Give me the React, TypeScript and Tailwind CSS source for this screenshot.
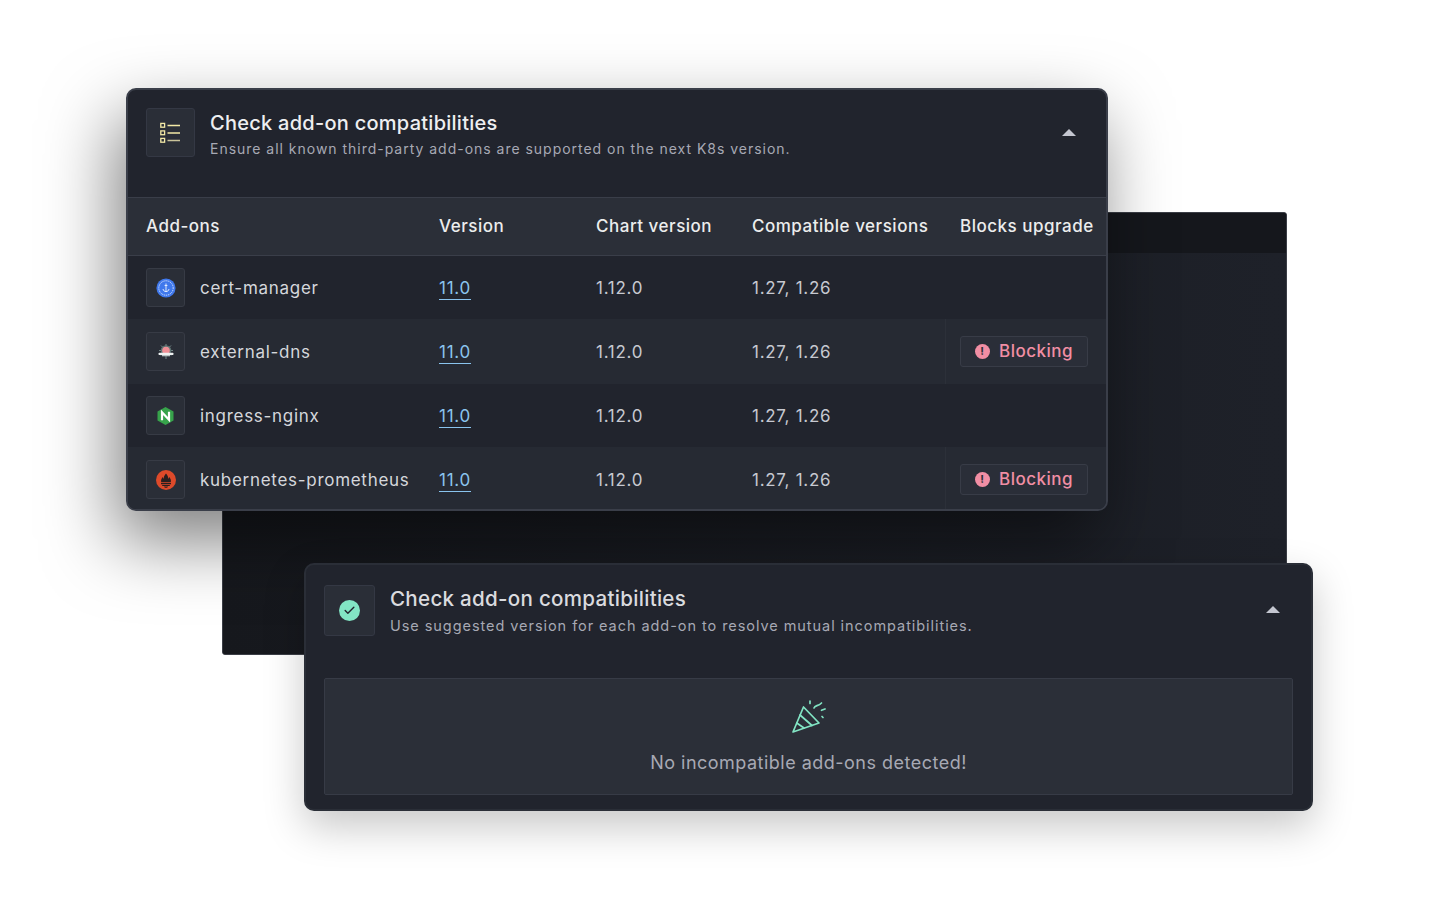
import { Check } from "lucide-react";

type Row = {
  name: string;
  icon: "cert" | "dns" | "nginx" | "prom";
  blocking?: boolean;
  shaded?: boolean;
};

const rows: Row[] = [
  { name: "cert-manager", icon: "cert" },
  { name: "external-dns", icon: "dns", blocking: true, shaded: true },
  { name: "ingress-nginx", icon: "nginx" },
  { name: "kubernetes-prometheus", icon: "prom", blocking: true, shaded: true },
];

function ChecklistIcon() {
  return (
    <svg className="-ml-px" width="20" height="22" viewBox="0 0 20 22" fill="none">
      <g stroke="#f3e9a6" strokeWidth="1.3">
        <rect x="0.8" y="1.4" width="3.8" height="3.8" />
        <rect x="0.8" y="8.900" width="3.8" height="3.8" />
        <rect x="0.8" y="16.400" width="3.8" height="3.8" />
        <path d="M7.500 3.500H20M7.500 11H20" />
        <path d="M7.500 18.500H20" stroke="#c9c39a" />
      </g>
    </svg>
  );
}

function AddonIcon({ icon }: { icon: Row["icon"] }) {
  if (icon === "cert") {
    return (
      <svg width="20" height="20" viewBox="0 0 20 20" fill="none">
        <circle cx="10" cy="10" r="9.600" fill="#3f78ec" />
        <circle cx="10" cy="10" r="7.200" stroke="#dbe7ff" strokeWidth="1" strokeDasharray="1.200 0.800" />
        <path d="M10 5.500v8M7 11c.4 1.800 1.500 2.600 3 2.600s2.600-.8 3-2.600M8.600 7.500h2.800" stroke="#eef4ff" strokeWidth="0.9" />
      </svg>
    );
  }
  if (icon === "dns") {
    return (
      <svg width="18" height="18" viewBox="0 0 18 18" fill="none">
        <path d="M9 1v15M2 7.500h14M4 2.500l10 10M14 2.500L4 12.500" stroke="#7d9290" strokeWidth="0.9" />
        <circle cx="9" cy="7.500" r="5.300" fill="#5d7372" />
        <circle cx="9" cy="7.500" r="3.800" fill="#ef8f96" />
        <rect x="1.500" y="9.700" width="15" height="2.300" rx="0.800" fill="#eef1f1" />
        <rect x="5" y="12" width="8" height="1.300" fill="#b9c4c4" />
      </svg>
    );
  }
  if (icon === "nginx") {
    return (
      <svg width="17" height="18" viewBox="0 0 17 18" fill="none">
        <path d="M8.500 0l8 4.500v9L8.500 18l-8-4.500v-9z" fill="#37a34b" />
        <path d="M5 13.300V5.200l7 7.600V4.700" stroke="#fff" strokeWidth="2.200" />
      </svg>
    );
  }
  return (
    <svg width="20" height="20" viewBox="0 0 20 20" fill="none">
      <circle cx="10" cy="10" r="10" fill="#dd4a2a" />
      <path
        d="M5.200 12.200C4.600 10 5.800 8.600 6.500 7c.5.700.8 1.300 1 2 .3-2.200 1-4 2.500-5.500C11.500 5 12.200 6.800 12.500 9c.2-.7.5-1.300 1-2 .7 1.600 1.900 3 1.300 5.200z"
        fill="#2a1f1f"
      />
      <path d="M5 13h10v1.300H5zM6.200 15h7.600v1H6.200zM8 16.400h4c-.3 1-1 1.400-2 1.400s-1.700-.4-2-1.400z" fill="#2a1f1f" />
    </svg>
  );
}

function BlockingBadge() {
  return (
    <div className="-mt-px flex h-[31px] w-[128px] items-center gap-[9px] rounded-[3px] border border-[#383c47] bg-[#2a2e38] pl-[14px]">
      <span className="flex h-[15px] w-[15px] items-center justify-center rounded-full bg-[#f18ea4] text-[11px] font-bold leading-none text-[#2a2e38]">
        !
      </span>
      <span className="pt-[2px] text-[17px] font-medium tracking-[0.03em] text-[#f18ea4]">Blocking</span>
    </div>
  );
}

function TableRow({ row }: { row: Row }) {
  return (
    <div className={`flex items-center text-[17px] tracking-[0.042em] text-[#c7c9d1] ${row.shaded ? "h-[65px] bg-[#262a33]" : "h-[63px]"}`}>
      <div className="flex w-[311px] shrink-0 items-center gap-[15px] pl-[18px]">
        <div className="flex h-[39px] w-[39px] items-center justify-center rounded-[3px] border border-[#373b45] bg-[#2a2e37]">
          <AddonIcon icon={row.icon} />
        </div>
        <span className="pt-[2px] text-[#d5d7dc]">{row.name}</span>
      </div>
      <div className="w-[157px] shrink-0 pt-[2px]">
        <span className="inline-block border-b border-[#8ac4ee] leading-[21px] text-[#8ac4ee]">11.0</span>
      </div>
      <div className="w-[156px] shrink-0 pt-[2px]">1.12.0</div>
      <div className="w-[193px] shrink-0 pt-[2px]">1.27, 1.26</div>
      <div className={`flex h-full flex-1 items-center pl-[14px] ${row.blocking ? "border-l border-[#2c3039]" : ""}`}>
        {row.blocking ? <BlockingBadge /> : null}
      </div>
    </div>
  );
}

function CompatTable() {
  return (
    <div className="absolute left-[126px] top-[88px] z-10 h-[423px] w-[982px] overflow-hidden rounded-[10px] border-2 border-[#3a3e49] bg-[#21242d] shadow-[-10px_30px_70px_rgba(0,0,0,0.5)]">
      <div className="flex h-[107px] items-start pl-[18px] pt-[18px]">
        <div className="flex h-[49px] w-[49px] items-center justify-center rounded-[3px] border border-[#343844] bg-[#2a2e37]">
          <ChecklistIcon />
        </div>
        <div className="ml-[15px] flex-1 pt-[1px]">
          <h2 className="text-[20px] font-medium leading-[28px] tracking-[0.013em] text-[#eeeff1]">
            Check add-on compatibilities
          </h2>
          <p className="text-[14px] leading-[24px] tracking-[0.07em] text-[#a7a9b4]">
            Ensure all known third-party add-ons are supported on the next K8s version.
          </p>
        </div>
        <div className="mr-[30px] mt-[21px] h-0 w-0 border-x-[7px] border-b-[7px] border-x-transparent border-b-[#c4c6d0]" />
      </div>
      <div className="flex h-[59px] items-center border-y border-[#3a3e49] bg-[#2b2f38] pl-[18px] text-[17px] font-medium tracking-[0.03em] text-[#eceded]">
        <div className="w-[293px] shrink-0">Add-ons</div>
        <div className="w-[157px] shrink-0">Version</div>
        <div className="w-[156px] shrink-0">Chart version</div>
        <div className="w-[208px] shrink-0">Compatible versions</div>
        <div className="whitespace-nowrap">Blocks upgrade</div>
      </div>
      {rows.map((row) => (
        <TableRow key={row.name} row={row} />
      ))}
    </div>
  );
}

function PartyIcon() {
  return (
    <svg width="36" height="36" viewBox="0 0 36 36" fill="none" stroke="#82e5c4" strokeWidth="1.700" strokeLinecap="round" strokeLinejoin="round">
      <path d="M12.500 8L28 24 2 33z" />
      <path d="M9 16l12 10.500M5.800 24l7.200 5" />
      <path d="M19 2v2.500M23 9c1-3 4-1.500 7.500-5M30.500 11.300L34 10M31 17.500l1 1" />
    </svg>
  );
}

function ResolvedPanel() {
  return (
    <div className="absolute left-[304px] top-[563px] z-20 h-[248px] w-[1009px] rounded-[10px] border-2 border-[#2a2e37] bg-[#21242d] shadow-[0_16px_40px_rgba(0,0,0,0.22)]">
      <div className="flex items-start pl-[18px] pt-[20px]">
        <div className="flex h-[51px] w-[51px] items-center justify-center rounded-[3px] border border-[#343844] bg-[#2a2e37]">
          <span className="flex h-[21px] w-[21px] items-center justify-center rounded-full bg-[#82e5c4]">
            <Check size={13} strokeWidth={2.6} color="#21242d" />
          </span>
        </div>
        <div className="ml-[15px] flex-1">
          <h2 className="text-[20.6px] font-medium leading-[28px] tracking-[0.013em] text-[#dadbdf]">
            Check add-on compatibilities
          </h2>
          <p className="text-[14.5px] leading-[26px] tracking-[0.065em] text-[#a7a9b4]">
            Use suggested version for each add-on to resolve mutual incompatibilities.
          </p>
        </div>
        <div className="mr-[31px] mt-[21px] h-0 w-0 border-x-[7px] border-b-[7px] border-x-transparent border-b-[#c4c6d0]" />
      </div>
      <div className="mx-[18px] mt-[39px] flex h-[117px] flex-col items-center rounded-[2px] border border-[#373b46] bg-[#2b2f38] pt-[20px]">
        <PartyIcon />
        <p className="mt-[15px] text-[18px] leading-[26px] tracking-[0.027em] text-[#a7a9b4]">
          No incompatible add-ons detected!
        </p>
      </div>
    </div>
  );
}

export default function App() {
  return (
    <div className="relative h-[900px] w-[1440px] overflow-hidden bg-white font-['Inter',sans-serif]">
      {/* back window, mostly hidden by the two panels */}
      <div className="absolute left-[222px] top-[212px] flex h-[443px] w-[1065px] flex-col overflow-hidden rounded-[3px] border border-[#3b3e46] bg-[#1c1f27]">
        <div className="h-[40px] bg-[#15171c]" />
        <div className="flex-1 bg-gradient-to-r from-[#16181d] to-[#1e2129]" />
      </div>
      <CompatTable />
      <ResolvedPanel />
    </div>
  );
}
